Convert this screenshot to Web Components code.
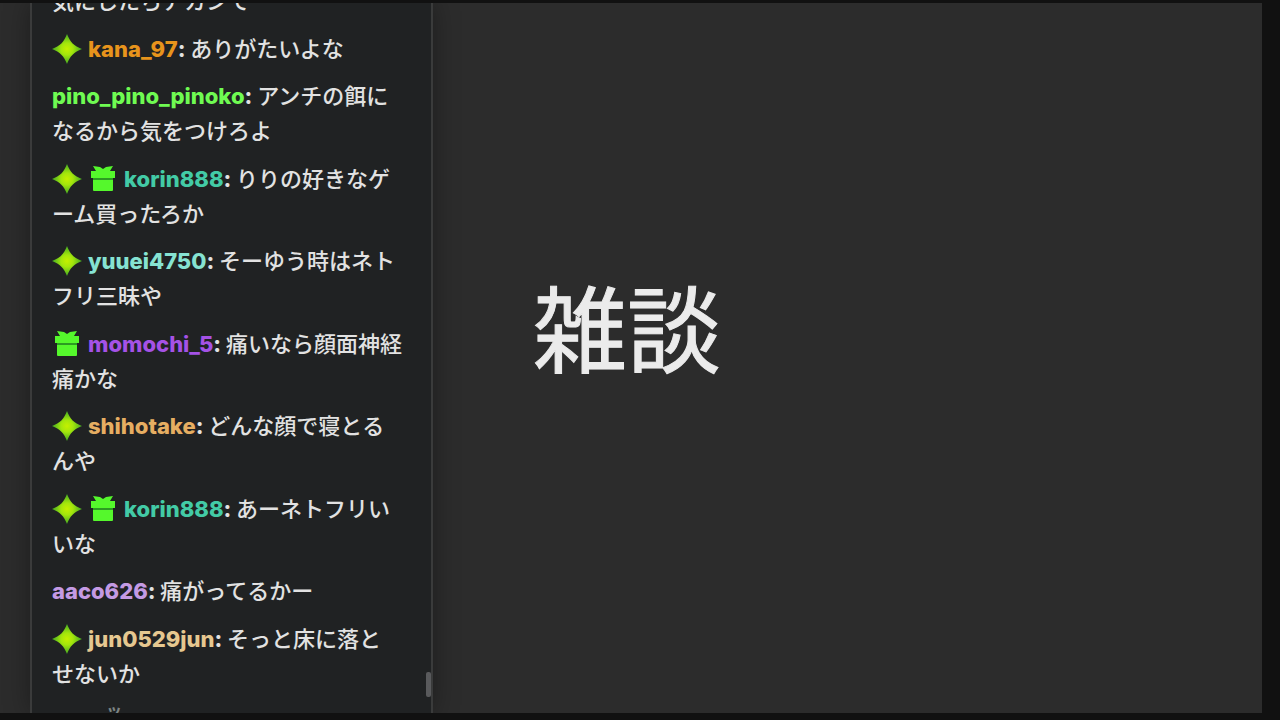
<!DOCTYPE html>
<html lang="ja">
<head>
<meta charset="utf-8">
<title>雑談</title>
<style>
  body {
    margin: 0;
    background: #111;
    color: #e2e2e2;
    font-family: Inter, "Noto Sans CJK JP", sans-serif;
  }
</style>
</head>
<body>
<stream-scene>
  <chat-panel slot="chat">
    <chat-message>気にしたらアカンて</chat-message>
    <chat-message name="kana_97" color="#e8941c" badges="star">ありがたいよな</chat-message>
    <chat-message name="pino_pino_pinoko" color="#6ffb52">アンチの餌に<br>なるから気をつけろよ</chat-message>
    <chat-message name="korin888" color="#43cba6" badges="star gift">りりの好きなゲ<br>ーム買ったろか</chat-message>
    <chat-message name="yuuei4750" color="#86e3d2" badges="star">そーゆう時はネト<br>フリ三昧や</chat-message>
    <chat-message name="momochi_5" color="#a552e6" badges="gift">痛いなら顔面神経<br>痛かな</chat-message>
    <chat-message name="shihotake" color="#e6ae62" badges="star">どんな顔で寝とる<br>んや</chat-message>
    <chat-message name="korin888" color="#43cba6" badges="star gift">あーネトフリい<br>いな</chat-message>
    <chat-message name="aaco626" color="#c49ae4">痛がってるかー</chat-message>
    <chat-message name="jun0529jun" color="#e6c890" badges="star">そっと床に落と<br>せないか</chat-message>
    <chat-incoming>ッ</chat-incoming>
  </chat-panel>
  <scene-title>雑談</scene-title>
</stream-scene>

<script>
class StreamScene extends HTMLElement {
  constructor() {
    super();
    this.attachShadow({ mode: 'open' });
    this.shadowRoot.innerHTML = `
      <style>
        :host {
          display: block;
          box-sizing: border-box;
          height: 100vh;
          padding: 3px 18px 7px 0;
        }
        main {
          display: grid;
          grid-template-columns: 403px 1fr;
          grid-template-rows: minmax(0, 1fr);
          height: 100%;
          box-sizing: border-box;
          padding-left: 30px;
          overflow: hidden;
          background: #2c2c2c;
        }
      </style>
      <main>
        <slot name="chat"></slot>
        <slot></slot>
      </main>
    `;
  }
}

class ChatPanel extends HTMLElement {
  constructor() {
    super();
    this.attachShadow({ mode: 'open' });
    this.shadowRoot.innerHTML = `
      <style>
        :host {
          display: block;
          position: relative;
          min-height: 0;
          border: solid #3a3b3b;
          border-width: 0 2px;
          background: #202223;
          box-shadow: 0 0 24px rgba(0, 0, 0, .35);
        }
        .log {
          display: flex;
          flex-direction: column;
          justify-content: space-between;
          box-sizing: border-box;
          height: 100%;
          padding: 0 20px;
          overflow: hidden;
        }
        ::slotted(:first-child) {
          margin-top: -19px;
        }
        .thumb {
          position: absolute;
          right: 0;
          bottom: 16px;
          width: 5px;
          height: 25px;
          border-radius: 2px;
          background: #595a5c;
        }
      </style>
      <div class="log"><slot></slot></div>
      <div class="thumb"></div>
    `;
  }
}

const BADGES = {
  star: `
    <svg viewBox="0 0 30 30" role="img" aria-label="star">
      <defs>
        <radialGradient id="g">
          <stop offset="0" stop-color="#c4f000"/>
          <stop offset=".4" stop-color="#a4e60c"/>
          <stop offset="1" stop-color="#3fa822"/>
        </radialGradient>
      </defs>
      <path fill="url(#g)" d="M15 0C18 8 22 12 30 15C22 18 18 22 15 30C12 22 8 18 0 15C8 12 12 8 15 0Z"/>
    </svg>`,
  gift: `
    <svg viewBox="0 0 30 30" role="img" aria-label="gift">
      <path fill="#55f82c" d="M5 2L12 3L15 5L18 3L25 2L22 7H27V14H3V7H8Z"/>
      <path fill="#2c9c22" d="M5 14H25V16H5Z"/>
      <path fill="#55f82c" d="M5 16H25V26Q25 27 24 27H6Q5 27 5 26Z"/>
    </svg>`
};

class ChatMessage extends HTMLElement {
  constructor() {
    super();
    this.attachShadow({ mode: 'open' });
  }

  connectedCallback() {
    const name = this.getAttribute('name');
    const badges = (this.getAttribute('badges') || '').split(' ').filter(Boolean);
    this.shadowRoot.innerHTML = `
      <style>
        :host {
          display: block;
          flex: none;
          font-size: 22px;
          font-weight: 500;
          line-height: 35px;
        }
        svg {
          width: 30px;
          height: 30px;
          margin-right: 6px;
          vertical-align: middle;
          margin-top: -4px;
        }
        .name {
          font-weight: 800;
          color: ${this.getAttribute('color') || 'inherit'};
        }
        .colon {
          font-weight: 800;
          font-variant-ligatures: no-contextual;
        }
      </style>
      ${badges.map(b => BADGES[b].trim()).join('')}${name ? `<span class="name">${name}</span><span class="colon">: </span>` : ''}<slot></slot>
    `;
  }
}

// the next message, still fading in under the last one
class ChatIncoming extends HTMLElement {
  constructor() {
    super();
    this.attachShadow({ mode: 'open' });
    this.shadowRoot.innerHTML = `
      <style>
        :host {
          display: block;
          flex: none;
          height: 9px;
          padding-left: 54px;
          font-size: 16px;
          font-weight: 700;
          line-height: 12px;
          color: #7c8484;
        }
      </style>
      <slot></slot>
    `;
  }
}

class SceneTitle extends HTMLElement {
  constructor() {
    super();
    this.attachShadow({ mode: 'open' });
    this.shadowRoot.innerHTML = `
      <style>
        :host {
          display: flex;
          align-items: center;
          padding: 0 0 52px 100px;
        }
        h1 {
          margin: 0;
          font-size: 94px;
          font-weight: 400;
          line-height: 1;
          color: #ebebeb;
          -webkit-text-stroke: 1px #ebebeb;
        }
      </style>
      <h1><slot></slot></h1>
    `;
  }
}

customElements.define('stream-scene', StreamScene);
customElements.define('chat-panel', ChatPanel);
customElements.define('chat-message', ChatMessage);
customElements.define('chat-incoming', ChatIncoming);
customElements.define('scene-title', SceneTitle);
</script>
</body>
</html>
